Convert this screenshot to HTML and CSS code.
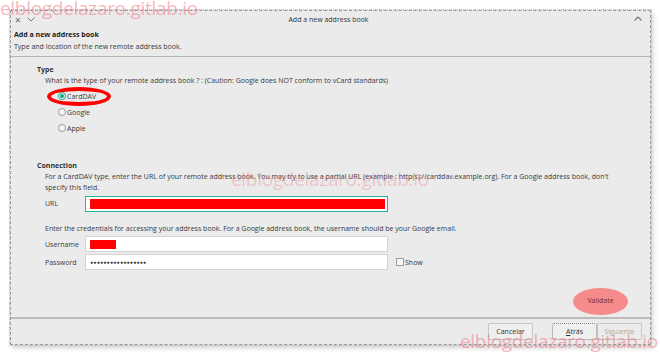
FILE: index.html
```html
<!DOCTYPE html>
<html lang="es">
<head>
    <meta charset="UTF-8">
    <title>Add a new address book</title>
    <link rel="stylesheet" href="styles.css">
</head>
<body>

<div class="mark mark-top">elblogdelazaro.gitlab.io</div>

<div class="dialog">
    <div class="titlebar">
        <div class="tb-left">
            <span class="tb-close">×</span>
            <svg class="tb-chev" width="8" height="5" viewBox="0 0 8 5"><path d="M0.5 0.5 L4 4 L7.5 0.5" fill="none" stroke="#777" stroke-width="1"/></svg>
        </div>
        <div class="tb-title">Add a new address book</div>
        <div class="tb-right">
            <svg width="8" height="5" viewBox="0 0 8 5"><path d="M0.5 4.5 L4 1 L7.5 4.5" fill="none" stroke="#777" stroke-width="1.2"/></svg>
        </div>
    </div>

    <div class="header">
        <h1>Add a new address book</h1>
        <p>Type and location of the new remote address book.</p>
    </div>

    <div class="content">
        <div class="section">
            <h2>Type</h2>
            <p class="indent">What is the type of your remote address book ? : (Caution: Google does NOT conform to vCard standards)</p>
            <div class="radios">
                <label class="radio-row highlight"><span class="radio checked"></span>CardDAV</label>
                <label class="radio-row"><span class="radio"></span>Google</label>
                <label class="radio-row"><span class="radio"></span>Apple</label>
            </div>
        </div>

        <div class="section connection">
            <h2>Connection</h2>
            <p class="indent">For a CardDAV type, enter the URL of your remote address book. You may try to use a partial URL (example : http(s)://carddav.example.org). For a Google address book, don't specify this field.</p>
            <div class="mark mark-mid">elblogdelazaro.gitlab.io</div>
            <div class="field-row">
                <span class="field-label">URL</span>
                <div class="input focused"><span class="redact redact-url"></span></div>
            </div>
            <p class="indent creds">Enter the credentials for accessing your address book. For a Google address book, the username should be your Google email.</p>
            <div class="field-row">
                <span class="field-label">Username</span>
                <div class="input"><span class="redact redact-user"></span></div>
            </div>
            <div class="field-row">
                <span class="field-label">Password</span>
                <div class="input"><span class="dots">●●●●●●●●●●●●●●●●●</span></div>
                <label class="check"><span class="box"></span>Show</label>
            </div>
        </div>

        <div class="validate-row">
            <button class="validate">Validate</button>
        </div>
    </div>

    <div class="footer">
        <button class="btn">Cancelar</button>
        <div class="pair">
            <button class="btn focus"><u>A</u>trás</button>
            <button class="btn disabled">Siguiente</button>
        </div>
    </div>
</div>

<div class="mark mark-bottom">elblogdelazaro.gitlab.io</div>

</body>
</html>
```

FILE: styles.css
```css
body {
    margin: 0;
    padding: 10px 0 0 10px;
    background-color: #fff;
    font-family: "Open Sans", "Noto Sans", sans-serif;
    font-size: 7px;
    color: #3a3a3a;
    width: 660px;
    height: 356px;
    overflow: hidden;
    position: relative;
    box-sizing: border-box;
}

.dialog {
    width: 641px;
    height: 335px;
    box-sizing: border-box;
    background-color: #ebebeb;
    border: 1px dashed #9a9a9a;
    outline: 1px dotted #f0a0a8;
    box-shadow: 2px 3px 5px rgba(0, 0, 0, 0.18);
    display: flex;
    flex-direction: column;
}

.titlebar {
    height: 17px;
    display: flex;
    align-items: center;
    padding: 0 8px 0 4px;
}

.tb-left {
    width: 60px;
    display: flex;
    align-items: center;
    gap: 6px;
    color: #666;
}

.tb-close {
    font-size: 10px;
    line-height: 10px;
}

.tb-title {
    flex: 1;
    text-align: center;
    color: #333;
    padding-right: 52px;
}

.tb-right {
    display: flex;
    align-items: center;
    margin-top: -3px;
}

.header {
    height: 27px;
    padding: 1px 0 0 3px;
    border-bottom: 1px solid #b4b4b4;
}

.header h1 {
    margin: 0;
    font-size: 7px;
    font-weight: 700;
    line-height: 11px;
    color: #222;
}

.header p {
    margin: 1px 0 0;
    line-height: 11px;
}

.content {
    height: 262px;
    box-sizing: border-box;
    padding: 7px 27px 0 26px;
    border-bottom: 2px solid #bcbcbc;
    position: relative;
}

h2 {
    margin: 0;
    font-size: 7px;
    font-weight: 700;
    line-height: 11px;
    color: #333;
}

.indent {
    margin: 0 0 0 8px;
    line-height: 11px;
}

.radios {
    margin: 2px 0 0 21px;
    display: flex;
    flex-direction: column;
}

.radio-row {
    height: 16px;
    display: flex;
    align-items: center;
    position: relative;
}

.radio {
    width: 8px;
    height: 8px;
    border: 1px solid #9c9c9c;
    border-radius: 50%;
    background-color: #f4f4f4;
    margin-right: 1px;
    box-sizing: border-box;
    position: relative;
}

.radio.checked::after {
    content: "";
    position: absolute;
    left: 1px;
    top: 1px;
    width: 4px;
    height: 4px;
    border-radius: 50%;
    background-color: #17a589;
}

.radio.checked {
    border-color: #17a589;
}

.highlight::before {
    content: "";
    position: absolute;
    left: -11px;
    top: -1px;
    width: 56px;
    height: 11px;
    border: 4px solid #f00;
    border-radius: 50%;
}

.connection {
    margin-top: 24px;
    position: relative;
}

.field-row {
    display: flex;
    align-items: center;
    height: 16px;
    margin-top: 2px;
}

.field-row .field-label {
    width: 40px;
    padding-left: 8px;
}

.input {
    width: 303px;
    height: 16px;
    box-sizing: border-box;
    background-color: #fff;
    border: 1px solid #d4d4d4;
    display: flex;
    align-items: center;
    padding-left: 4px;
}

.input.focused {
    border: 1px solid #2bb39a;
    margin-top: 3px;
    margin-bottom: 2px;
}

.redact {
    display: block;
    background-color: #f00;
    height: 10px;
}

.redact-url {
    width: 295px;
}

.redact-user {
    width: 26px;
    height: 9px;
}

.dots {
    font-size: 5px;
    letter-spacing: 0.3px;
    color: #333;
}

.creds {
    margin-top: 12px;
    margin-bottom: 1px;
}

.check {
    display: flex;
    align-items: center;
    margin-left: 8px;
}

.check .box {
    width: 8px;
    height: 8px;
    border: 1px solid #9c9c9c;
    background-color: #f6f6f6;
    box-sizing: border-box;
    margin-right: 1px;
}

.validate-row {
    display: flex;
    justify-content: flex-end;
    margin-top: 24px;
}

button {
    font-family: inherit;
    font-size: 7px;
    cursor: pointer;
}

.validate {
    width: 45px;
    height: 13px;
    padding: 0;
    background: transparent;
    border: 1px dotted #888;
    color: #7a2a2a;
    position: relative;
    z-index: 0;
}

.validate::before {
    content: "";
    position: absolute;
    left: -6px;
    top: -7px;
    width: 55px;
    height: 27px;
    border-radius: 50%;
    background-color: #f58b8b;
    z-index: -1;
}

.footer {
    flex: 1;
    display: flex;
    align-items: center;
    justify-content: flex-end;
    padding-right: 8px;
    gap: 19px;
}

.pair {
    display: flex;
}

.btn {
    width: 45px;
    height: 17px;
    padding: 0;
    background-color: #efefef;
    border: 1px solid #c6c6c6;
    border-radius: 2px;
    color: #333;
}

.btn.focus {
    border: 1px dotted #888;
}

.btn.disabled {
    color: #aaa;
    background-color: #ececec;
}

.mark {
    position: absolute;
    font-family: "Open Sans", "Noto Sans", sans-serif;
    color: rgba(240, 110, 125, 0.5);
    white-space: nowrap;
    pointer-events: none;
    line-height: 1;
    font-size: 19px;
    letter-spacing: -0.3px;
}

.mark-top {
    left: 0;
    top: -1px;
}

.mark-bottom {
    left: 460px;
    top: 332px;
}

.mark-mid {
    left: 194px;
    top: 10px;
    color: rgba(240, 120, 130, 0.35);
}
```
